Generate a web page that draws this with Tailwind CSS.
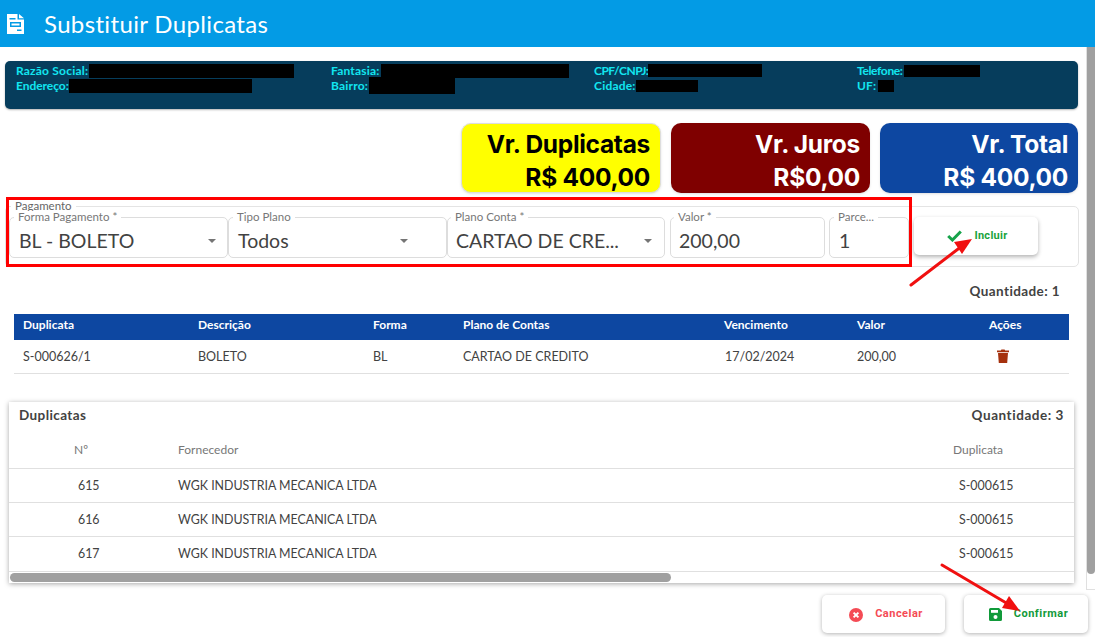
<!DOCTYPE html>
<html lang="pt-BR">
<head>
<meta charset="UTF-8">
<title>Substituir Duplicatas</title>
<script src="https://cdn.jsdelivr.net/npm/@tailwindcss/browser@4"></script>
</head>
<body class="relative h-[637px] w-[1095px] overflow-hidden bg-white font-['Lato','Open_Sans',sans-serif] text-[#424242]">
    <!-- Header -->
    <header class="flex h-[47px] items-center bg-[#039be5] pl-[7px] text-white">
        <svg class="h-[20px] w-[17px]" viewBox="0 0 17 20" fill="#fff"><path d="M0 0h10.500v5.500H17V20H0z M12 0l5 4.200h-5z"/><path fill="#039be5" d="M2.500 4h6v1.600h-6zM3 8h11v5H3zM10 15.500h4.500v1.400H10z"/><path fill="#fff" d="M4.500 9.500h8v2h-8z"/></svg>
        <h1 class="ml-[20px] text-[24px] leading-none tracking-[0.35px]">Substituir Duplicatas</h1>
    </header>

    <div class="flex">
        <main class="w-[1086px] pt-[14px]">
            <!-- Dados do cliente -->
            <section class="mx-[5px] grid h-[48px] w-[1073px] grid-cols-[315px_263px_263px_1fr] content-start rounded-[5px] bg-[#063d5c] pl-[11px] pt-[2px] text-[12px] leading-[15px] font-bold tracking-[0.2px] text-[#12e6f0] shadow-[0_1px_2px_rgba(0,0,0,.3)]">
                <p class="flex h-[15px] items-center">Razão Social:<span class="ml-px h-[14px] w-[205px] bg-black"></span></p>
                <p class="flex h-[15px] items-center">Fantasia:<span class="ml-px h-[14px] w-[188px] bg-black"></span></p>
                <p class="flex h-[15px] items-center tracking-[-0.5px]">CPF/CNPJ:<span class="h-[13px] w-[114px] bg-black"></span></p>
                <p class="flex h-[15px] items-center tracking-[-0.35px]">Telefone:<span class="ml-px h-[12px] w-[76px] bg-black"></span></p>
                <p class="flex h-[15px] items-center tracking-[-0.05px]">Endereço:<span class="h-[14px] w-[183px] bg-black"></span></p>
                <p class="flex h-[15px] items-center">Bairro:<span class="ml-px h-[17px] w-[86px] bg-black"></span></p>
                <p class="flex h-[15px] items-center">Cidade:<span class="h-[12px] w-[62px] bg-black"></span></p>
                <p class="flex h-[15px] items-center">UF:<span class="ml-[2px] h-[12px] w-[16px] bg-black"></span></p>
            </section>

            <!-- Totais -->
            <section class="mt-[14px] flex justify-end gap-[10px] pr-[8px] text-right font-['Inter',sans-serif] text-[24.5px] leading-[33px] font-bold tracking-[-0.3px]">
                <div class="h-[70px] w-[200px] rounded-[10px] border border-[#ddd] bg-[#ffff00] px-[10px] pt-[4px] text-black shadow-sm"><p>Vr. Duplicatas</p><p>R$ 400,00</p></div>
                <div class="h-[70px] w-[199px] rounded-[10px] bg-[#7f0000] px-[10px] pt-[5px] text-white shadow-sm"><p>Vr. Juros</p><p>R$0,00</p></div>
                <div class="h-[70px] w-[198px] rounded-[10px] bg-[#0d47a1] px-[10px] pt-[5px] text-white shadow-sm"><p>Vr. Total</p><p>R$ 400,00</p></div>
            </section>

            <!-- Pagamento -->
            <div class="relative mx-[5px] mt-[13px] h-[61px] w-[1074px] rounded-[5px] border border-[#e4e4e4] pl-[3px]">
                <span class="absolute -top-[7px] left-[5px] bg-white px-[4px] text-[11.5px] leading-[12px] text-[#666]">Pagamento</span>
                <div class="flex w-full items-start pt-[10px]">
                    <div class="relative flex h-[41px] w-[219px] items-center justify-between rounded-[5px] border border-[#ddd] pl-[9px] pr-[11px] pt-[6px] text-[19.5px]">
                        <span class="absolute -top-[7px] left-[4px] bg-white px-[4px] text-[11.5px] leading-[12px] text-[#777]">Forma Pagamento *</span>
                        BL - BOLETO<span class="h-0 w-0 border-x-[4px] border-t-[4px] border-x-transparent border-t-[#757575]"></span>
                    </div>
                    <div class="relative flex h-[41px] w-[219px] items-center justify-between rounded-[5px] border border-[#ddd] pl-[9px] pr-[38px] pt-[6px] text-[19.5px]">
                        <span class="absolute -top-[7px] left-[4px] bg-white px-[4px] text-[11.5px] leading-[12px] text-[#777]">Tipo Plano</span>
                        Todos<span class="h-0 w-0 border-x-[4px] border-t-[4px] border-x-transparent border-t-[#757575]"></span>
                    </div>
                    <div class="relative flex h-[41px] w-[218px] items-center justify-between rounded-[5px] border border-[#ddd] pl-[8px] pr-[12px] pt-[6px] text-[19.5px]">
                        <span class="absolute -top-[7px] left-[3px] bg-white px-[4px] text-[11.5px] leading-[12px] text-[#777]">Plano Conta *</span>
                        CARTAO DE CRE...<span class="h-0 w-0 border-x-[4px] border-t-[4px] border-x-transparent border-t-[#757575]"></span>
                    </div>
                    <div class="relative ml-[5px] flex h-[41px] w-[155px] items-center rounded-[5px] border border-[#ddd] pl-[8px] pt-[6px] text-[19.5px]">
                        <span class="absolute -top-[7px] left-[3px] bg-white px-[4px] text-[11.5px] leading-[12px] text-[#777]">Valor *</span>
                        200,00
                    </div>
                    <div class="relative ml-[4px] flex h-[41px] w-[80px] items-center rounded-[5px] border border-[#ddd] pl-[9px] pt-[6px] text-[19.5px]">
                        <span class="absolute -top-[7px] left-[4px] bg-white px-[4px] text-[11.5px] leading-[12px] text-[#777]">Parce...</span>
                        1
                    </div>
                    <button class="ml-[5px] flex h-[38px] w-[124px] items-center justify-center gap-[12px] rounded-[5px] bg-white pl-[3px] font-['Roboto',sans-serif] text-[11px] font-bold tracking-[0.3px] text-[#1aa33c] shadow-[0_2px_4px_rgba(0,0,0,.3)]">
                        <svg class="h-[12px] w-[15px]" viewBox="0 0 15 12" fill="none" stroke="#16a34a" stroke-width="3"><path d="M1.200 6l4.200 4L13.800 1.500"/></svg>
                        Incluir
                    </button>
                </div>
            </div>

            <!-- Parcelas -->
            <p class="mt-[15px] pr-[26px] text-right text-[13.5px] leading-[18px] font-bold tracking-[0.4px]">Quantidade: 1</p>
            <table class="mx-[14px] mt-[14px] w-[1055px] table-fixed text-left text-[12.5px]">
                <colgroup><col class="w-[175px]"><col class="w-[175px]"><col class="w-[90px]"><col class="w-[261px]"><col class="w-[132px]"><col class="w-[101px]"><col></colgroup>
                <thead class="bg-[#0d47a1] text-[12px] text-white">
                    <tr class="h-[26px]">
                        <th class="pb-[4px] pl-[9px] font-bold">Duplicata</th><th class="pb-[4px] pl-[9px] font-bold">Descrição</th><th class="pb-[4px] pl-[9px] font-bold">Forma</th><th class="pb-[4px] pl-[9px] font-bold">Plano de Contas</th><th class="pb-[4px] pl-[9px] font-bold">Vencimento</th><th class="pb-[4px] pl-[10px] font-bold">Valor</th><th class="pb-[4px] pl-[41px] font-bold">Ações</th>
                    </tr>
                </thead>
                <tbody>
                    <tr class="h-[33px] border-b border-[#e0e0e0]">
                        <td class="pl-[9px] pt-[2px]">S-000626/1</td><td class="pl-[9px] pt-[2px]">BOLETO</td><td class="pl-[9px] pt-[2px]">BL</td><td class="pl-[9px] pt-[2px]">CARTAO DE CREDITO</td><td class="pl-[10px] pt-[2px]">17/02/2024</td><td class="pl-[10px] pt-[2px]">200,00</td>
                        <td class="pl-[49px]"><svg class="h-[14px] w-[12px]" viewBox="0 0 12 14" fill="#a5310e"><path d="M0 1.600h3.800L4.400.6h3.200l.6 1H12v1.600H0zM1 4h10l-.8 10H1.800z"/></svg></td>
                    </tr>
                </tbody>
            </table>

            <!-- Duplicatas -->
            <section class="mx-[9px] mt-[28px] h-[181px] w-[1065px] overflow-hidden bg-white shadow-[0_1px_5px_rgba(0,0,0,.35)]">
                <div class="flex h-[22px] items-end justify-between px-[10px] text-[13.5px] leading-[18px] font-bold tracking-[0.4px]"><span>Duplicatas</span><span class="tracking-[0.55px]">Quantidade: 3</span></div>
                <div class="grid h-[45px] grid-cols-[169px_775px_1fr] items-center border-b border-[#e0e0e0] pt-[8px] text-[12px] text-[#777]"><span class="pl-[65px]">Nº</span><span>Fornecedor</span><span>Duplicata</span></div>
                <div class="grid h-[34px] grid-cols-[169px_781px_1fr] items-center border-b border-[#e0e0e0] pt-[2px] text-[12.4px]"><span class="pl-[69px]">615</span><span>WGK INDUSTRIA MECANICA LTDA</span><span>S-000615</span></div>
                <div class="grid h-[34px] grid-cols-[169px_781px_1fr] items-center border-b border-[#e0e0e0] pt-[2px] text-[12.4px]"><span class="pl-[69px]">616</span><span>WGK INDUSTRIA MECANICA LTDA</span><span>S-000615</span></div>
                <div class="grid h-[35px] grid-cols-[169px_781px_1fr] items-center border-b border-[#e0e0e0] pt-[2px] text-[12.4px]"><span class="pl-[69px]">617</span><span>WGK INDUSTRIA MECANICA LTDA</span><span>S-000615</span></div>
                <div class="pl-px pt-px"><div class="h-[9px] w-[661px] rounded-full bg-[#a0a0a0]"></div></div>
            </section>

            <!-- Ações -->
            <div class="ml-[822px] mt-[12px] flex w-[266px] gap-[19px]">
                <button class="flex h-[38px] w-[123px] shrink-0 items-center justify-center gap-[12px] rounded-[5px] bg-white pl-[5px] pt-[2px] font-['Roboto',sans-serif] text-[11px] font-bold tracking-[0.5px] text-[#f44b55] shadow-[0_1px_4px_rgba(0,0,0,.3)]">
                    <svg class="h-[14px] w-[14px]" viewBox="0 0 14 14"><circle cx="7" cy="7" r="7" fill="#f44b55"/><path d="M4.600 4.600l4.800 4.800M9.400 4.600l-4.800 4.800" stroke="#fff" stroke-width="2"/></svg>
                    Cancelar
                </button>
                <button class="flex h-[38px] w-[124px] shrink-0 items-center justify-center gap-[12px] rounded-[5px] bg-white pl-[5px] pt-[2px] font-['Roboto',sans-serif] text-[11px] font-bold tracking-[0.5px] text-[#119a3a] shadow-[0_1px_4px_rgba(0,0,0,.3)]">
                    <svg class="h-[13px] w-[13px]" viewBox="0 0 13 13" fill="#119a3a"><path d="M0 1.500A1.500 1.500 0 011.500 0H10l3 3v8.500A1.500 1.500 0 0111.500 13h-10A1.500 1.500 0 010 11.500z"/><path fill="#fff" d="M2 2h7v2.800H2z"/><circle cx="6.500" cy="9" r="2" fill="#fff"/></svg>
                    Confirmar
                </button>
            </div>
        </main>
        <!-- Scrollbar da página -->
        <div class="h-[543px] w-[9px] border-b border-l border-[#e0e0e0]"><div class="h-[527px] rounded-b-[5px] bg-[#a0a0a0]"></div></div>
    </div>

    <!-- Marcações vermelhas sobre o print -->
    <div class="absolute left-[6px] top-[197px] h-[70px] w-[906px] border-[3px] border-[#ff0000]"></div>
    <svg class="absolute inset-0 h-[637px] w-[1095px]" viewBox="0 0 1095 637" fill="#f01010" stroke="#f01010">
        <path d="M911 285L962 246" stroke-width="3" stroke-linecap="round"/><path stroke="none" d="M972 239l-18 3 8 12z"/>
        <path d="M942 565L1008 604" stroke-width="3" stroke-linecap="round"/><path stroke="none" d="M1020 611l-18-3 7-12z"/>
    </svg>
</body>
</html>
